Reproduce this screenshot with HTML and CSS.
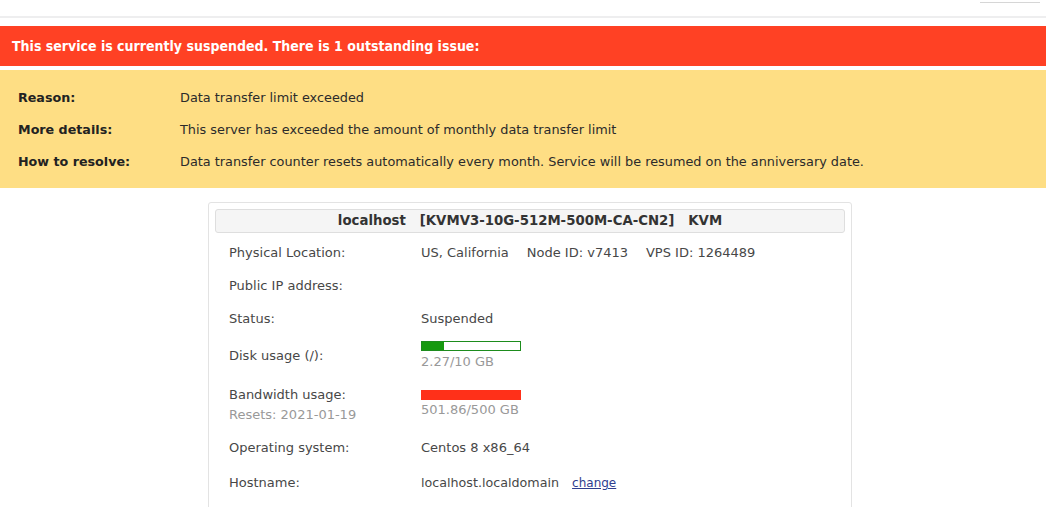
FILE: index.html
```html
<!DOCTYPE html>
<html lang="en">
<head>
<meta charset="utf-8">
<title>VPS Control Panel</title>
<link rel="stylesheet" href="styles.css">
</head>
<body>
<div class="topbar"><span class="topbtn"></span></div>

<div class="alert-red">This service is currently suspended. There is 1 outstanding issue:</div>

<div class="alert-yellow">
  <div class="issue-row"><span class="issue-label">Reason:</span><span>Data transfer limit exceeded</span></div>
  <div class="issue-row"><span class="issue-label">More details:</span><span>This server has exceeded the amount of monthly data transfer limit</span></div>
  <div class="issue-row"><span class="issue-label">How to resolve:</span><span>Data transfer counter resets automatically every month. Service will be resumed on the anniversary date.</span></div>
</div>

<div class="card">
  <div class="card-head">localhost&nbsp;&nbsp;&nbsp;[KVMV3-10G-512M-500M-CA-CN2]&nbsp;&nbsp;&nbsp;KVM</div>
  <div class="info">
    <div class="row"><div class="lbl">Physical Location:</div><div class="val">US, California<span class="gap"></span>Node ID: v7413<span class="gap"></span>VPS ID: 1264489</div></div>
    <div class="row"><div class="lbl">Public IP address:</div><div class="val"></div></div>
    <div class="row row-status"><div class="lbl">Status:</div><div class="val">Suspended</div></div>
    <div class="row row-disk">
      <div class="lbl">Disk usage (/):</div>
      <div class="val">
        <div class="bar bar-green"><div class="fill" style="width:22.7%"></div></div>
        <div class="muted">2.27/10 GB</div>
      </div>
    </div>
    <div class="row row-bw">
      <div class="lbl">Bandwidth usage:<div class="muted resets">Resets: 2021-01-19</div></div>
      <div class="val">
        <div class="bar bar-red"><div class="fill" style="width:100%"></div></div>
        <div class="muted">501.86/500 GB</div>
      </div>
    </div>
    <div class="row row-os"><div class="lbl">Operating system:</div><div class="val">Centos 8 x86_64</div></div>
    <div class="row"><div class="lbl">Hostname:</div><div class="val"><span class="host">localhost.localdomain</span><span class="gap-sm"></span><a href="#" class="link">change</a></div></div>
  </div>
</div>
</body>
</html>
```

FILE: styles.css
```css
html, body {
  margin: 0;
  padding: 0;
  background: #fff;
}

body {
  font-family: "DejaVu Sans", Verdana, sans-serif;
  font-size: 12px;
  color: #333;
}

/* top navigation strip */
.topbar {
  height: 16px;
  border-bottom: 2px solid #eeeeef;
  display: flex;
  justify-content: flex-end;
  margin-bottom: 8px;
}

.topbtn {
  display: block;
  width: 60px;
  height: 2px;
  margin-right: 6px;
  border-bottom: 1px solid #d6d6d6;
}

/* suspension notice */
.alert-red {
  background: #ff4124;
  color: #fff;
  font-family: "DejaVu Sans Condensed", "DejaVu Sans", sans-serif;
  font-weight: bold;
  font-size: 14px;
  height: 40px;
  line-height: 40px;
  padding-left: 12px;
  margin-bottom: 4px;
}

.alert-yellow {
  background: #fede84;
  color: #2b2b2b;
  padding: 20px 0 18px 18px;
  display: flex;
  flex-direction: column;
  gap: 16px;
  font-size: 12.85px;
}

.issue-row {
  display: flex;
  line-height: 16px;
}

.issue-label {
  width: 162px;
  font-weight: bold;
  font-size: 12.7px;
  color: #222;
}

/* server card */
.card {
  width: 630px;
  margin: 14px 0 0 208px;
  border: 1px solid #e3e3e3;
  border-radius: 3px;
  padding: 6px;
  min-height: 400px;
}

.card-head {
  background: #f5f5f5;
  border: 1px solid #dedede;
  border-radius: 3px;
  height: 22px;
  line-height: 22px;
  text-align: center;
  font-weight: bold;
  font-size: 13.3px;
  color: #333;
}

.info {
  padding: 12px 0 0 14px;
  font-size: 13px;
  color: #474747;
}

.row {
  display: flex;
  line-height: 16px;
  margin-bottom: 17px;
}

.row-status {
  margin-bottom: 14px;
}

.row-disk {
  align-items: center;
  margin-bottom: 17px;
}

.row-bw .val {
  padding-top: 3px;
}

.row-os {
  margin-bottom: 19px;
}

.lbl {
  width: 192px;
  flex: none;
}

.val {
  flex: 1;
}

.host {
  font-size: 12.7px;
}

.gap {
  display: inline-block;
  width: 18px;
}

.gap-sm {
  display: inline-block;
  width: 13px;
}

.muted {
  color: #999;
  font-size: 13px;
  line-height: 16px;
}

.resets {
  margin-top: 4px;
}

.bar {
  width: 100px;
  height: 10px;
  box-sizing: border-box;
}

.row-disk .bar {
  margin-bottom: 3px;
}

.row-bw .bar {
  margin-bottom: 2px;
}

.bar .fill {
  height: 100%;
}

.bar-green {
  border: 1px solid #1d8c1d;
  background: #fff;
}

.bar-green .fill {
  background: #16990f;
}

.bar-red {
  background: #ff3019;
}

.bar-red .fill {
  background: #ff3019;
}

.link {
  color: #2e3d8f;
  font-size: 12px;
  text-decoration: underline;
}
```
